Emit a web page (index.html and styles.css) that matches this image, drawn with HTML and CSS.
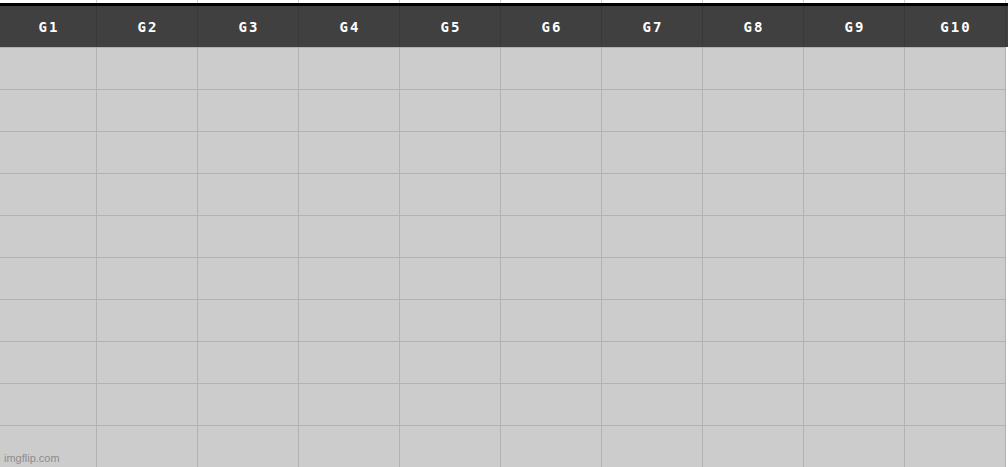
FILE: index.html
```html
<!DOCTYPE html>
<html>
<head>
<meta charset="utf-8">
<link rel="stylesheet" href="styles.css">
</head>
<body>
<div class="sheet">
  <div class="strip">
    <div></div><div></div><div></div><div></div><div></div><div></div><div></div><div></div><div></div><div></div>
  </div>
  <div class="bar"></div>
  <div class="head">
    <div class="hcell">G1</div><div class="hcell">G2</div><div class="hcell">G3</div><div class="hcell">G4</div><div class="hcell">G5</div><div class="hcell">G6</div><div class="hcell">G7</div><div class="hcell">G8</div><div class="hcell">G9</div><div class="hcell">G10</div>
  </div>
  <div class="grid">
    <div class="cell"></div><div class="cell"></div><div class="cell"></div><div class="cell"></div><div class="cell"></div><div class="cell"></div><div class="cell"></div><div class="cell"></div><div class="cell"></div><div class="cell"></div>
    <div class="cell"></div><div class="cell"></div><div class="cell"></div><div class="cell"></div><div class="cell"></div><div class="cell"></div><div class="cell"></div><div class="cell"></div><div class="cell"></div><div class="cell"></div>
    <div class="cell"></div><div class="cell"></div><div class="cell"></div><div class="cell"></div><div class="cell"></div><div class="cell"></div><div class="cell"></div><div class="cell"></div><div class="cell"></div><div class="cell"></div>
    <div class="cell"></div><div class="cell"></div><div class="cell"></div><div class="cell"></div><div class="cell"></div><div class="cell"></div><div class="cell"></div><div class="cell"></div><div class="cell"></div><div class="cell"></div>
    <div class="cell"></div><div class="cell"></div><div class="cell"></div><div class="cell"></div><div class="cell"></div><div class="cell"></div><div class="cell"></div><div class="cell"></div><div class="cell"></div><div class="cell"></div>
    <div class="cell"></div><div class="cell"></div><div class="cell"></div><div class="cell"></div><div class="cell"></div><div class="cell"></div><div class="cell"></div><div class="cell"></div><div class="cell"></div><div class="cell"></div>
    <div class="cell"></div><div class="cell"></div><div class="cell"></div><div class="cell"></div><div class="cell"></div><div class="cell"></div><div class="cell"></div><div class="cell"></div><div class="cell"></div><div class="cell"></div>
    <div class="cell"></div><div class="cell"></div><div class="cell"></div><div class="cell"></div><div class="cell"></div><div class="cell"></div><div class="cell"></div><div class="cell"></div><div class="cell"></div><div class="cell"></div>
    <div class="cell"></div><div class="cell"></div><div class="cell"></div><div class="cell"></div><div class="cell"></div><div class="cell"></div><div class="cell"></div><div class="cell"></div><div class="cell"></div><div class="cell"></div>
    <div class="cell"></div><div class="cell"></div><div class="cell"></div><div class="cell"></div><div class="cell"></div><div class="cell"></div><div class="cell"></div><div class="cell"></div><div class="cell"></div><div class="cell"></div>
  </div>
  <div class="mark">imgflip.com</div>
</div>
</body>
</html>
```

FILE: styles.css
```css
html, body {
  margin: 0;
  padding: 0;
  background: #ffffff;
  overflow: hidden;
}

.sheet {
  position: relative;
  width: 1008px;
  height: 467px;
}

.strip,
.head,
.grid {
  display: grid;
  grid-template-columns: 97px repeat(9, 101px);
}

.strip {
  height: 3px;
}

.strip > div {
  border-right: 1px solid #d0d0d0;
}

.bar {
  height: 3px;
  width: 1008px;
  background: #000000;
}

.head {
  height: 41px;
  background: #404040;
}

.hcell {
  border-right: 1px solid #393939;
  display: flex;
  align-items: center;
  justify-content: center;
  padding-left: 2px;
  padding-top: 1px;
  color: #ffffff;
  font-family: "DejaVu Sans Mono", monospace;
  font-weight: bold;
  font-size: 14px;
  letter-spacing: 2px;
}

.grid {
  grid-auto-rows: 42px;
}

.cell {
  background: #cccccc;
  border-top: 1px solid #b2b2b2;
  border-right: 1px solid #b2b2b2;
}

.mark {
  position: absolute;
  left: 4px;
  bottom: 3px;
  font-family: "Liberation Sans", Arial, sans-serif;
  font-size: 11px;
  color: #8c8c8c;
}
```
